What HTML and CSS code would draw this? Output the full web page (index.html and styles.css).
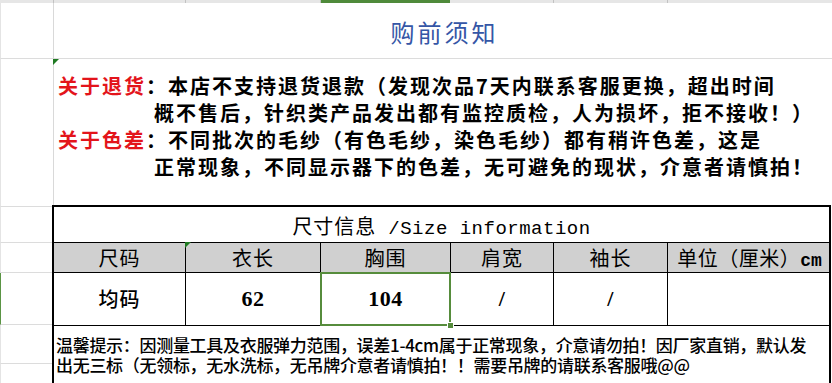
FILE: index.html
```html
<!DOCTYPE html>
<html lang="zh-CN">
<head>
<meta charset="utf-8">
<title>购前须知</title>
<link rel="stylesheet" href="styles.css">
</head>
<body>
<div class="colheads">
  <span class="ch c0"></span><span class="ch c1"></span><span class="ch c2"></span><span class="ch c3"></span><span class="ch c4"></span><span class="ch c5"></span><span class="ch c6"></span>
</div>
<div class="sheet">
  <div class="rowheads">
    <div class="ra r1"></div>
    <div class="ra r2"></div>
    <div class="ra r3"></div>
    <div class="ra r4"></div>
    <div class="ra r5"></div>
    <div class="ra r6"></div>
    <div class="ra r7"></div>
  </div>
  <div class="content">
    <div class="title">购前须知</div>
    <div class="notice">
      <i class="flag"></i>
      <p class="line"><span class="red">关于退货</span>：本店不支持退货退款（发现次品7天内联系客服更换，超出时间</p>
      <p class="line indent">概不售后，针织类产品发出都有监控质检，人为损坏，拒不接收！）</p>
      <p class="line"><span class="red">关于色差</span>：不同批次的毛纱（有色毛纱，染色毛纱）都有稍许色差，这是</p>
      <p class="line indent">正常现象，不同显示器下的色差，无可避免的现状，介意者请慎拍！</p>
    </div>
    <div class="size">
      <div class="cap">尺寸信息<span class="mono"> /Size information</span></div>
      <div class="hd">尺码</div>
      <div class="hd"><i class="flag"></i>衣长</div>
      <div class="hd">胸围</div>
      <div class="hd">肩宽</div>
      <div class="hd">袖长</div>
      <div class="hd unit">单位（厘米）<span class="cm">cm</span></div>
      <div class="td">均码</div>
      <div class="td num">62</div>
      <div class="td num sel">104<i class="handle"></i></div>
      <div class="td num">/</div>
      <div class="td num">/</div>
      <div class="td"></div>
      <div class="note">
        <p class="nl">温馨提示：因测量工具及衣服弹力范围，误差1-4cm属于正常现象，介意请勿拍！因厂家直销，默认发<br>出无三标（无领标，无水洗标，无吊牌介意者请慎拍！！需要吊牌的请联系客服哦@@</p>
      </div>
    </div>
  </div>
</div>
</body>
</html>
```

FILE: styles.css
```css
html, body {
  margin: 0;
  padding: 0;
}

body {
  width: 832px;
  height: 383px;
  overflow: hidden;
  background: #ffffff;
  font-family: "Noto Sans CJK SC", "Noto Sans", sans-serif;
  color: #000;
}

/* column header strip */
.colheads {
  display: flex;
  height: 3px;
  background: #e6e6e6;
}

.ch {
  box-sizing: border-box;
  height: 3px;
  border-right: 1px solid #c2c2c2;
  flex: none;
}

.c0 { width: 54px; }
.c1 { width: 132px; }
.c2 { width: 135px; }
.c3 { width: 129px; background: #4f8a3b; border-right: none; }
.c4 { width: 104px; }
.c5 { width: 114px; }
.c6 { flex: 1; border-right: none; }

/* sheet */
.sheet {
  display: flex;
}

.rowheads {
  width: 54px;
  flex: none;
  box-sizing: border-box;
  border-right: 1px solid #d9d9d9;
}

.ra {
  box-sizing: border-box;
  border-bottom: 1px solid #dcdcdc;
  border-left: 1px solid #e4e4e4;
}

.r1 { height: 56px; }
.r2 { height: 148px; }
.r3 { height: 36px; }
.r4 { height: 30px; }
.r5 { height: 52px; border-left: 1px solid #5a9444; }
.r6 { height: 39px; }
.r7 { height: 40px; }

.content {
  flex: 1;
  min-width: 0;
}

.title {
  height: 56px;
  box-sizing: border-box;
  border-bottom: 1px solid #dcdcdc;
  text-align: center;
  font-size: 24px;
  letter-spacing: 3px;
  padding-left: 3px;
  padding-top: 4px;
  line-height: 50px;
  color: #3556a6;
}

.notice {
  position: relative;
  height: 146px;
  box-sizing: border-box;
  padding: 13px 0 0 4px;
}

.line {
  margin: 0;
  font-size: 20px;
  line-height: 27px;
  letter-spacing: 2px;
  font-weight: 700;
  white-space: nowrap;
}

.indent {
  padding-left: 96px;
}

.red {
  color: #e3141b;
}

.flag {
  position: absolute;
  left: -1px;
  top: 0;
  width: 0;
  height: 0;
  border-top: 6px solid #1f7a22;
  border-right: 6px solid transparent;
}

/* size table */
.size {
  margin-left: -2px;
  width: 779px;
  box-sizing: border-box;
  border: 2px solid #000;
  display: grid;
  grid-template-columns: 131px 134px 129px 102px 113px 161px;
  grid-template-rows: 35px 29px 52px 70px;
  gap: 1px;
  background: #000;
}

.cap {
  grid-column: 1 / -1;
  background: #fff;
  text-align: center;
  font-size: 20px;
  letter-spacing: 1px;
  line-height: 32px;
  padding-top: 3px;
  white-space: nowrap;
}

.mono {
  font-family: "Liberation Mono", monospace;
  font-size: 19px;
  letter-spacing: 0.5px;
}

.hd {
  position: relative;
  background: #d0d0d0;
  text-align: center;
  font-size: 20px;
  letter-spacing: 1px;
  line-height: 29px;
  white-space: nowrap;
}

.hd .flag {
  left: -1px;
  top: -1px;
}

.unit {
  letter-spacing: 0.5px;
  overflow: hidden;
  padding-left: 2px;
}

.cm {
  font-family: "Liberation Mono", monospace;
  font-weight: 700;
  font-size: 18px;
  letter-spacing: 0;
}

.td {
  position: relative;
  background: #fff;
  text-align: center;
  font-size: 20px;
  letter-spacing: 1px;
  line-height: 52px;
  font-weight: 500;
}

.num {
  font-family: "Liberation Serif", serif;
  font-weight: 700;
  font-size: 22px;
  letter-spacing: 0.5px;
}

.sel {
  z-index: 2;
  outline: 2px solid #568c3c;
  outline-offset: -1px;
}

.handle {
  position: absolute;
  right: -4px;
  bottom: -4px;
  width: 5px;
  height: 5px;
  background: #568c3c;
  border: 1px solid #fff;
}

.note {
  grid-column: 1 / -1;
  background: #fff;
  padding: 9px 0 0 2px;
}

.nl {
  margin: 0;
  font-size: 17px;
  line-height: 20px;
  letter-spacing: -0.3px;
  font-weight: 500;
  white-space: nowrap;
}
```
